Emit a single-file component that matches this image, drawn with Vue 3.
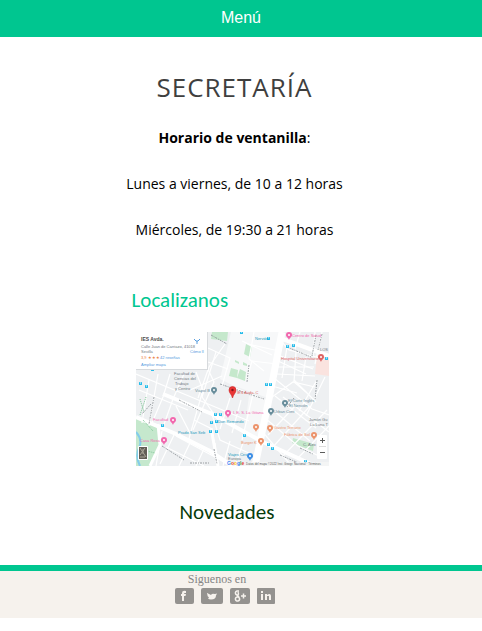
<script setup>
const localStreets = [
  'M0 42L60 67L113 89', 'M3 58L52 78', 'M13 48L6 91', 'M22 42L13 94', 'M34 42L27 65L16 91',
  'M48 42L37 67L26 98', 'M60 40L67 58L52 110', 'M70 33L78 50L57 98', 'M80 20L66 65L82 88',
  'M89 12L73 35L62 66', 'M72 16L94 26L86 54', 'M72 30L92 37', 'M54 58L86 44', 'M40 74L54 101',
  'M26 99L20 134', 'M38 103L24 132', 'M54 111L43 134', 'M68 117L60 134', 'M79 111L82 134',
  'M30 115L68 134', 'M40 104L90 131', 'M58 88L76 97L80 123', 'M75 79L84 108L115 122',
  'M94 66L84 97', 'M105 68L96 101', 'M117 62L106 108', 'M96 55L128 67', 'M106 9L136 23',
  'M118 0L113 27L128 39', 'M111 46L116 29L141 32', 'M112 12L143 19', 'M144 8L153 18L188 27',
  'M142 23L177 37', 'M142 29L170 42', 'M142 35L178 35', 'M141 42L179 44', 'M151 15L146 46',
  'M160 20L158 50L170 60', 'M170 25L166 49', 'M136 65L157 50L179 55', 'M136 54L161 61',
  'M158 48L180 70', 'M181 48L163 79', 'M189 45L170 84', 'M138 46L176 77L193 83',
  'M139 64L180 96', 'M132 74L174 109', 'M129 86L162 114L183 124', 'M125 98L154 132',
  'M161 72L132 103', 'M174 74L136 116', 'M191 78L146 125', 'M193 94L161 127', 'M147 65L193 100',
  'M179 0L177 24', 'M186 0L179 32', 'M164 0L159 17', 'M94 109L87 134', 'M107 111L99 134'
]
const labels = [
  { x: 119, y: 8, t: 'Nervión', c: 'blue' }, { x: 156, y: 5, t: 'Centro de Salud', c: 'pink' },
  { x: 145, y: 28, t: 'Hospital Universitario', c: 'red' }, { x: 38, y: 43, t: 'Facultad de', c: 'gray' },
  { x: 38, y: 48, t: 'Ciencias del', c: 'gray' }, { x: 39, y: 53, t: 'Trabajo', c: 'gray' },
  { x: 39, y: 58, t: 'y Centro', c: 'gray' }, { x: 59, y: 60, t: 'Viapol B', c: 'slate' },
  { x: 101, y: 62, t: 'IES Avda. C', c: 'red' }, { x: 17, y: 89, t: 'Facultad', c: 'pink' },
  { x: 4, y: 110, t: 'Casa Rosa Ma', c: 'pink' }, { x: 97, y: 82, t: 'I. E. S. La Gitana', c: 'pink' },
  { x: 82, y: 91, t: 'Don Remondo', c: 'blue' }, { x: 42, y: 102, t: 'Prado San Seb', c: 'blue' },
  { x: 152, y: 70, t: 'El Corte Inglés', c: 'slate' }, { x: 153, y: 75, t: 'El Nervión', c: 'slate' },
  { x: 138, y: 81, t: 'Urban Cent', c: 'slate' }, { x: 173, y: 89, t: 'Jamón Gu', c: 'gray' },
  { x: 174, y: 94, t: 'La Luna T', c: 'gray' }, { x: 138, y: 97, t: 'Gastro Terrario', c: 'orange' },
  { x: 148, y: 104, t: 'Fábrica de Sol', c: 'orange' }, { x: 105, y: 112, t: 'Burger K', c: 'orange' },
  { x: 92, y: 124, t: 'Viajes Ces', c: 'blue' }, { x: 92, y: 128, t: 'Europa', c: 'gray' },
  { x: 167, y: 114, t: 'C. Alex', c: 'gray' },
  { x: 184, y: 19, t: 'LOS', c: 'gray' }
]
const pins = [
  { x: 153, y: 5, c: 'pink' }, { x: 185, y: 27, c: 'red' }, { x: 78, y: 60, c: 'slate' },
  { x: 37, y: 90, c: 'pink' }, { x: 28, y: 110, c: 'pink' }, { x: 92, y: 83, c: 'pink' },
  { x: 149, y: 73, c: 'slate' }, { x: 135, y: 81, c: 'slate' }, { x: 120, y: 97, c: 'orange' },
  { x: 134, y: 98, c: 'orange' }, { x: 178, y: 105, c: 'orange' }, { x: 125, y: 111, c: 'orange' },
  { x: 114, y: 126, c: 'route' }
]
const stops = [
  [132, 6], [105, 0], [151, 14], [157, 13], [190, 26], [130, 52], [134, 52], [16, 37], [4, 51],
  [10, 54], [79, 82], [84, 82], [75, 90], [80, 89], [74, 99], [80, 99], [26, 93], [108, 103], [132, 112], [136, 116], [169, 129]
]
</script>

<template>
  <div class="page">
    <header class="bar"><button type="button" class="menu">Menú</button></header>
    <main class="content">
      <h1>SECRETARÍA</h1>
      <p><strong>Horario de ventanilla</strong>:</p>
      <p>Lunes a viernes, de 10 a 12 horas</p>
      <p>Miércoles, de 19:30 a 21 horas</p>
      <section class="location">
        <h2>Localizanos</h2>
        <svg class="map" viewBox="0 0 193 134" role="img" aria-label="Mapa">
          <rect width="193" height="134" fill="#eef0f2" />
          <path d="M95 0H143L132 66L96 53L84 47Z" fill="#f7f8f9" />
          <path d="M113 64L132 68L122 107L108 102Z" fill="#f6f7f8" />
          <path d="M76 0H92L91 9L75 7ZM95 36L102 38L101 46L93 44ZM104 37L110 40L109 49L101 46ZM110 12L116 15L114 25L108 22ZM99 28l4 2v2l-4-2ZM107 30l4 2v2l-4-1ZM157 106L178 112L177 119L156 111Z" fill="#c5e8cc" />
          <path d="M0 86L22 95L24 113L14 134H0Z" fill="#c5e8cd" />
          <path d="M181 23L193 24V44L179 42Z" fill="#fae3df" />
          <path d="M0 100Q7 108 3 116T4 134" fill="none" stroke="#83cdea" stroke-width="2" />
          <path v-for="d in localStreets" :key="d" :d="d" fill="none" stroke="#fff" stroke-width="1.2" />
          <g fill="none" stroke="#fff">
            <path d="M146 0L133 67L119 134" stroke-width="7" />
            <path d="M0 85L40 102L74 119L96 134M27 62L76 82L127 110L177 133" stroke-width="4" />
            <path d="M144 6L193 24" stroke-width="4" />
            <path d="M22 92L24 113L14 134M75 96L82 134" stroke-width="3" />
          </g>
          <g class="street-names">
            <path d="M43 68L66 80M84 52L128 67M113 33L111 50M180 3L176 24M186 2L182 18M26 114L48 128M144 123L165 132M151 15L175 25M15 72L6 82M18 65L13 92M164 116L177 122M181 48L179 68M158 66L151 75M78 117L81 132M75 3L91 12M54 131H74" />
          </g>
          <path class="park-dots" d="M4 67L8 80M10 65L4 83M7 88L17 99M7 118L19 121" />
          <g v-for="(s, i) in stops" :key="i">
            <rect :x="s[0] - 1" :y="s[1] - 1" width="3" height="3" rx=".6" fill="#27bcea" />
            <path :d="`M${s[0]} ${s[1]}h1`" stroke="#fff" />
          </g>
          <text v-for="l in labels" :key="l.t" :x="l.x" :y="l.y" :class="['label', l.c]">{{ l.t }}</text>
          <g v-for="(p, i) in pins" :key="`pin-${i}`" :class="p.c">
            <path :d="`M${p.x} ${p.y + 3}c-1-3-3-3-3-5a3 3 0 0 1 6 0c0 2-2 2-3 5Z`" />
            <circle :cx="p.x" :cy="p.y - 2" r="1" fill="#fff" />
          </g>
          <path d="M96.500 66C95.500 62 93 61 93 58A3.500 3.500 0 0 1 100 58C100 61 97.500 62 96.500 66Z" fill="#ea3535" stroke="#c92525" stroke-width=".6" />
          <circle cx="96.500" cy="58" r="1.200" fill="#85151a" />
          <rect width="72" height="38" fill="#d7dadd" />
          <rect width="71" height="37" fill="#fff" />
          <text x="5" y="9" class="place">IES Avda.</text>
          <text x="5" y="16" class="label gray">Calle Juan de Carriazo, 41018</text>
          <text x="5" y="21" class="label gray">Sevilla</text>
          <text x="5" y="27" class="label rating">3,9 ★★★</text>
          <text x="24" y="27" class="label link">42 reseñas</text>
          <text x="5" y="34" class="label link">Ampliar mapa</text>
          <path d="M58 7L60 9H62L64 7M61 9V12" fill="none" stroke="#579dde" />
          <text x="54" y="21" class="label link">Cómo ll</text>
          <rect x="2" y="114" width="10" height="14" rx="1" fill="#fff" />
          <rect x="3" y="115" width="8" height="12" fill="#625f57" />
          <path d="M4 116l6 9M9 116l-5 7M4 125h5M7 117v5" stroke="#aaa698" />
          <rect x="181" y="103" width="10" height="24" rx="1" fill="#fff" />
          <path d="M184 108.500h5M186.500 106v5M184 120.500h5" stroke="#5c5c5c" />
          <path d="M183 114.500h7" stroke="#ddd" />
          <rect x="108" y="130" width="85" height="4" fill="#f4f5f5" opacity=".9" />
          <text x="110" y="133" class="legal">Datos del mapa ©2022 Inst. Geogr. Nacional · Términos</text>
          <text x="91" y="133" class="google"><tspan fill="#4285f4">G</tspan><tspan fill="#ea4335">o</tspan><tspan fill="#fbbc05">o</tspan><tspan fill="#4285f4">g</tspan><tspan fill="#34a853">l</tspan><tspan fill="#ea4335">e</tspan></text>
        </svg>
      </section>
      <h2 class="news">Novedades</h2>
    </main>
    <footer>
      <div class="follow">Siguenos en</div>
      <nav class="social" aria-label="Redes sociales">
        <a href="#" aria-label="Facebook"><svg width="19" height="16" viewBox="0 0 19 16"><rect width="19" height="16" rx="2" /><path class="mark" d="M7 13V8H6V6h1V5q0-3 4-2v2h-1q-1 0-1 1h2l-.5 2H9v5Z" /></svg></a>
        <a href="#" aria-label="Twitter"><svg width="22" height="16" viewBox="0 0 22 16"><rect width="22" height="16" rx="2" /><path class="mark" d="M6 5l4 2q1-2 4-1l2-.5-1 2q0 4-5 4-2 0-3-1l1-1-2-2h1L6 6Z" /></svg></a>
        <a href="#" aria-label="Google Plus"><svg width="20" height="16" viewBox="0 0 20 16"><rect width="20" height="16" rx="2" /><path class="outline" d="M9 3H7a2 2 0 1 0 1 4q1-1 0-3M7 7l2 2M7 9a2 2 0 1 0 1 4 2 2 0 0 0-1-4M11 8h5M13.500 5.500v5" /></svg></a>
        <a href="#" aria-label="LinkedIn"><svg width="18" height="16" viewBox="0 0 18 16"><rect width="18" height="16" rx="1" /><path class="mark" d="M4 6h2v6H4ZM4 3h2v2H4ZM8 6h2v1q1-1 3-1 1 1 1 2v4h-2V8h-2v4H8Z" /></svg></a>
      </nav>
    </footer>
  </div>
</template>

<style>
body { margin: 0; background: #fff; }
</style>

<style scoped>
.page { font-family: "Open Sans", sans-serif; color: #000; }
.bar { background: #00c690; display: flex; }
.menu { flex: 1; height: 37px; padding: 0 0 2px; border: 0; background: none; color: #fff; font: 16px "Liberation Sans", Arial, sans-serif; }
.content { padding: 30px 13px 39px 0; display: flex; flex-direction: column; align-items: center; }
h1, h2, p { margin: 0; font-weight: 400; }
h1 { font-size: 26px; line-height: 40px; font-weight: 500; letter-spacing: 1px; color: #3f3f3f; margin-bottom: 8px; }
p { font-size: 14px; line-height: 46px; }
h2 { font: 21px/28px Carlito, Lato, sans-serif; }
.location { width: 206px; margin-top: 33px; color: #00c690; }
.map { display: block; width: 193px; height: 134px; margin: 18px 0 0 4px; }
.news { margin: 32px 15px 0 0; color: #063b0b; }
.label { font: 4px "Liberation Sans", sans-serif; }
.place { font: bold 5px "Liberation Sans", sans-serif; fill: #4b4b4b; }
.legal { font: 3px "Liberation Sans", sans-serif; fill: #555; }
.google { font: bold 5px "Liberation Sans", sans-serif; }
.blue { fill: #2399bb; }
.pink { fill: #f268ae; }
.red { fill: #dc6464; }
.gray { fill: #707980; }
.slate { fill: #688d9b; }
.orange { fill: #ec936b; }
.route { fill: #3d8ee5; }
.link { fill: #549be0; }
.rating { fill: #eb8042; }
.street-names { fill: none; stroke: #858b90; stroke-width: 1; stroke-dasharray: 2 1 1 1; opacity: .8; }
.park-dots { fill: none; stroke: #80c797; stroke-dasharray: 1 1; }
footer { border-top: 6px solid #00c690; background: #f6f2ed; height: 47px; padding-right: 32px; display: flex; flex-direction: column; align-items: center; }
.follow { margin-right: 16px; font: 12px/17px "Liberation Serif", serif; color: #858585; }
.social { display: flex; gap: 7px; }
.social a, .social svg { display: block; }
.social svg { fill: #94928f; }
.social .mark { fill: #f6f2ed; }
.social .outline { fill: none; stroke: #f6f2ed; stroke-width: 1.5; }
</style>
